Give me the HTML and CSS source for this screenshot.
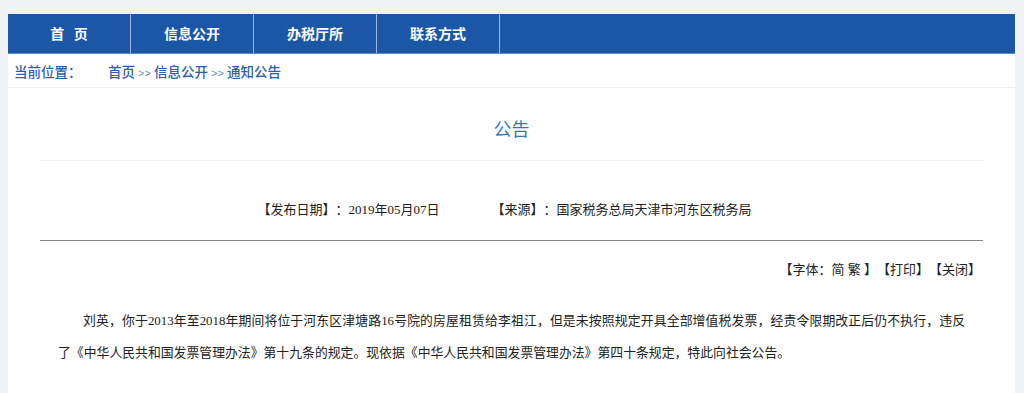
FILE: index.html
```html
<!DOCTYPE html>
<html lang="zh-CN">
<head>
<meta charset="utf-8">
<title>公告</title>
<link rel="stylesheet" href="styles.css">
</head>
<body>
<div class="page">
  <nav class="nav">
    <a class="nav-item" href="#">首&nbsp;&nbsp;&nbsp;页</a>
    <a class="nav-item" href="#">信息公开</a>
    <a class="nav-item" href="#">办税厅所</a>
    <a class="nav-item" href="#">联系方式</a>
  </nav>
  <div class="crumbs">
    <span class="crumbs-label">当前位置：</span>
    <span class="crumbs-path"><a href="#">首页</a> <span class="sep">&gt;&gt;</span> <a href="#">信息公开</a> <span class="sep">&gt;&gt;</span> <a href="#">通知公告</a></span>
  </div>
  <div class="article">
    <h1 class="title">公告</h1>
    <div class="meta">
      <span>【发布日期】：2019年05月07日</span>
      <span>【来源】：国家税务总局天津市河东区税务局</span>
    </div>
    <div class="tools">【字体：简 繁 】【打印】【关闭】</div>
    <p class="body-text">刘英，你于2013年至2018年期间将位于河东区津塘路16号院的房屋租赁给李祖江，但是未按照规定开具全部增值税发票，经责令限期改正后仍不执行，违反了《中华人民共和国发票管理办法》第十九条的规定。现依据《中华人民共和国发票管理办法》第四十条规定，特此向社会公告。</p>
  </div>
</div>
</body>
</html>
```
FILE: styles.css
```css
html, body {
  margin: 0;
  padding: 0;
}
body {
  background: #f0f3f6;
  font-family: "Liberation Serif", "Noto Sans CJK SC", serif;
  color: #333;
  text-spacing-trim: space-all;
}
.page {
  width: 1007px;
  margin: 14px 0 0 8px;
  background: #fff;
  height: 379px;
  overflow: hidden;
}
.nav {
  display: flex;
  height: 39px;
  background: #1b57a6;
  border-bottom: 1px solid #5d8bd0;
}
.nav-item {
  width: 122px;
  border-right: 1px solid #9db5dd;
  color: #fff;
  text-decoration: none;
  font-family: "Noto Sans CJK SC", sans-serif;
  font-weight: bold;
  font-size: 14px;
  line-height: 39px;
  text-align: center;
}
.crumbs {
  display: flex;
  height: 33px;
  align-items: center;
  padding-left: 6px;
  border-bottom: 1px solid #ececec;
  font-family: "Noto Sans CJK SC", sans-serif;
  font-size: 13.5px;
  font-weight: 500;
  color: #2c5fb3;
}
.crumbs-label {
  width: 94px;
}
.crumbs a {
  color: #2c5fb3;
  text-decoration: none;
}
.crumbs .sep {
  font-family: "Liberation Sans", sans-serif;
  font-size: 11px;
  font-weight: normal;
  color: #6a8cc8;
}
.article {
  padding: 0 32px;
}
.title {
  margin: 0;
  padding: 28px 0 20px;
  border-bottom: 1px dotted #e4e4e4;
  font-family: "Noto Sans CJK SC", sans-serif;
  font-weight: normal;
  font-size: 18px;
  line-height: 24px;
  text-align: center;
  color: #3d6fc6;
}
.meta {
  display: flex;
  justify-content: center;
  gap: 52px;
  margin-top: 39px;
  padding: 0 14px 20px 0;
  border-bottom: 1px solid #888;
  font-size: 13px;
  line-height: 20px;
  color: #222;
}
.tools {
  padding: 19px 2px 0 0;
  text-align: right;
  font-size: 13px;
  line-height: 20px;
  color: #222;
}
.body-text {
  margin: 25px 0 0;
  padding: 0 18px 0 18px;
  text-indent: 25px;
  text-align: justify;
  font-size: 12.85px;
  line-height: 32px;
  color: #222;
}
```
